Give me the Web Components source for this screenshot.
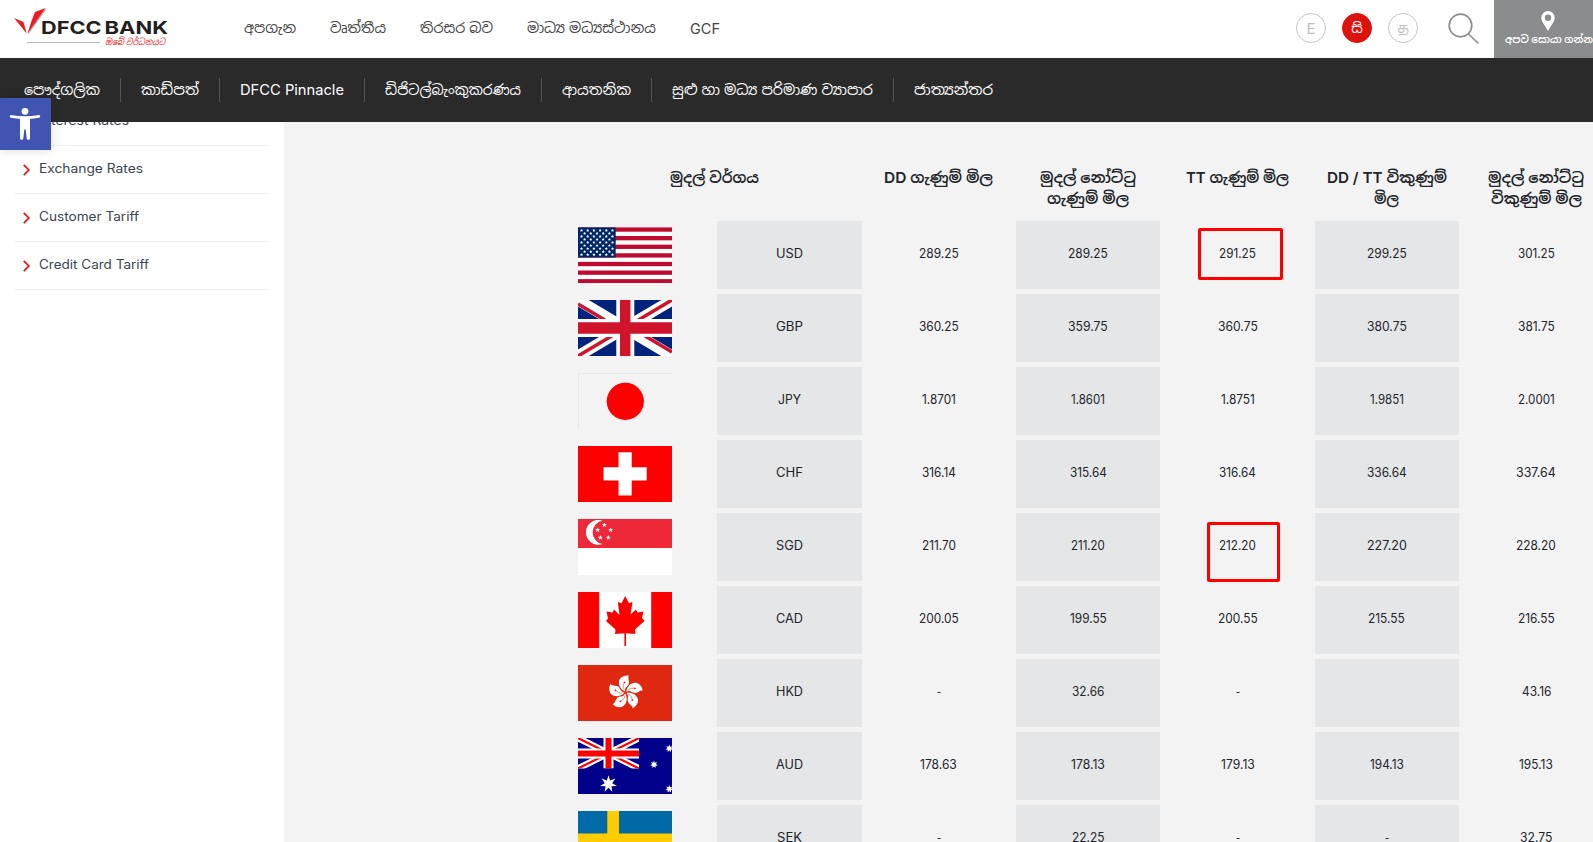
<!DOCTYPE html>
<html lang="si">
<head>
<meta charset="utf-8">
<title>DFCC Bank - Exchange Rates</title>
<style>
  html, body {
    margin: 0;
    height: 100%;
    overflow: hidden;
  }

  body {
    font-family: Inter, "Noto Sans Sinhala", "Noto Sans", sans-serif;
    color: #212529;
    background: #fff;
  }
</style>
</head>
<body>
<bank-page></bank-page>

<script>
// text squeezed or stretched to a given width
class FitText extends HTMLElement {
  constructor() {
    super()
    const shadow = this.attachShadow({ mode: "open" });
    shadow.innerHTML = `
      <style>
        :host { display: inline-block; white-space: nowrap; text-align: left; }
        span { display: inline-block; transform-origin: 0 50%; }
      </style>
      <span><slot></slot></span>
    `
  }

  connectedCallback() {
    const width = Number(this.getAttribute("width"));
    const span = this.shadowRoot.querySelector("span");
    const natural = span.getBoundingClientRect().width;
    this.style.width = `${width}px`;
    if (natural > 0) {
      span.style.transform = `scaleX(${width / natural})`;
    }
  }
}

class BankLogo extends HTMLElement {
  constructor() {
    super()
    const shadow = this.attachShadow({ mode: "open" });
    shadow.innerHTML = `
      <style>
        :host { display: block; width: 170px; height: 58px; }
        svg { display: block; }
      </style>
      <svg width="170" height="58" viewBox="0 0 170 58">
        <path d="M47 8.500 40.500 17.500 29 33.500 27.500 33.500 36 14Z" fill="#b5b5b5"/>
        <path d="M45.500 8 35 12 31.500 21 27.500 33.500 37.500 19.500Z" fill="#ed1c24"/>
        <path d="M14 18 23.500 22 26.700 33.500Z" fill="#ed1c24"/>
        <g font-family="Inter, sans-serif" font-weight="700" font-size="18" fill="#231f20">
          <text x="41" y="34" textLength="60.500" lengthAdjust="spacingAndGlyphs">DFCC</text>
          <text x="104.500" y="34" textLength="63.500" lengthAdjust="spacingAndGlyphs">BANK</text>
        </g>
        <path d="M27 42.500H100" stroke="#b8b8b8"/>
        <text x="105" y="45" font-size="9" font-style="italic" fill="#ed1c24" textLength="60" lengthAdjust="spacingAndGlyphs">ඔබේ වර්ධනයට</text>
      </svg>
    `
  }
}

const topLinks = [["අපගැන", 52, 34], ["වෘත්තීය", 56, 34], ["තිරසර බව", 73, 34], ["මාධ්‍ය මධ්‍යස්ථානය", 129, 34], ["GCF", 30, 0]];

class TopBar extends HTMLElement {
  constructor() {
    super()
    const shadow = this.attachShadow({ mode: "open" });
    shadow.innerHTML = `
      <style>
        :host { display: flex; height: 58px; background: #fff; overflow: hidden; }
        nav { display: flex; align-items: center; padding-left: 74px; flex: 1; font-size: 14px; color: #444; height: 56px; }
        .langs { display: flex; gap: 16px; padding-top: 13px; }
        .langs span {
          box-sizing: border-box; width: 30px; height: 30px; border-radius: 50%;
          border: 1px solid #c6c6c6; color: #c0c0c0; font-size: 15px; line-height: 30px; text-align: center;
        }
        .langs .on { background: #dc130c; border-color: #dc130c; color: #fff; font-size: 14px; line-height: 28px; }
        .langs .ta { font-size: 16px; line-height: 27px; }
        .search { margin: 12px 14px 0 30px; }
        .find {
          width: 99px; background: #8a8c8e; color: #fff; font-size: 10px; font-weight: 600;
          display: flex; flex-direction: column; align-items: flex-start; white-space: nowrap;
        }
        .find svg { margin: 11px 0 0 47px; flex: none; }
        .find fit-text { margin-left: 11px; line-height: 16px; }
      </style>
      <bank-logo></bank-logo>
      <nav>${topLinks.map(([t, w, gap]) => `<fit-text width="${w}" style="margin-right:${gap}px">${t}</fit-text>`).join("")}</nav>
      <div class="langs"><span>E</span><span class="on">සි</span><span class="ta">த</span></div>
      <svg class="search" width="32" height="34" viewBox="0 0 32 34" fill="none" stroke="#8d8d8f" stroke-width="1.700">
        <circle cx="12.500" cy="13.500" r="11.300"/><path d="M20.500 22 30.500 31.500"/>
      </svg>
      <div class="find">
        <svg width="14" height="20" viewBox="0 0 14 20">
          <path fill="#fff" fill-rule="evenodd" d="M7 0a6.700 6.700 0 0 0-6.700 6.700C.3 10.500 3.500 13.500 7 20c3.500-6.500 6.700-9.500 6.700-13.300A6.700 6.700 0 0 0 7 0Zm0 3.600a3.200 3.200 0 1 1 0 6.400 3.200 3.200 0 0 1 0-6.400Z"/>
        </svg>
        <fit-text width="88">අපව සොයා ගන්න</fit-text>
      </div>
    `
  }
}

const mainLinks = [["පෞද්ගලික", 76], ["කාඩ්පත්", 58], ["DFCC Pinnacle", 104], ["ඩිජිටල්බැංකුකරණය", 136], ["ආයතනික", 69], ["සුළු හා මධ්‍ය පරිමාණ ව්‍යාපාර", 201], ["ජාත්‍යන්තර", 79]];

class MainNav extends HTMLElement {
  constructor() {
    super()
    const shadow = this.attachShadow({ mode: "open" });
    shadow.innerHTML = `
      <style>
        :host { display: flex; align-items: center; height: 64px; padding-left: 4px; background: #2a2a2a; color: #fff; font-size: 14.500px; }
        div { display: flex; align-items: center; height: 24px; padding: 0 20px; border-right: 1px solid #555; }
        div:last-child { border: 0; }
        fit-text { margin-bottom: 2px; }
      </style>
      ${mainLinks.map(([t, w]) => `<div><fit-text width="${w}">${t}</fit-text></div>`).join("")}
    `
  }
}

const sideLinks = [["Interest Rates", 90], ["Exchange Rates", 104], ["Customer Tariff", 100], ["Credit Card Tariff", 110]];

class SideMenu extends HTMLElement {
  constructor() {
    super()
    const shadow = this.attachShadow({ mode: "open" });
    shadow.innerHTML = `
      <style>
        :host { display: block; box-sizing: border-box; width: 284px; padding: 0 15px 0 14px; margin-top: -24px; flex: none; }
        div {
          box-sizing: border-box; height: 48px; width: 255px; padding-left: 9px; border-bottom: 1px solid #f0f0f0;
          display: flex; align-items: center; gap: 9px; font-size: 12.800px; color: #3b4450;
        }
        fit-text { margin-bottom: 2px; }
      </style>
      ${sideLinks.map(([t, w]) => `
        <div>
          <svg width="7" height="12" viewBox="0 0 7 12" fill="none" stroke="#e21b22" stroke-width="1.800"><path d="M.8 .8 5.800 6 .8 11.200"/></svg>
          <fit-text width="${w}">${t}</fit-text>
        </div>`).join("")}
    `
  }
}

// points of a star centred on x, y
function star(x, y, outer, inner, n) {
  const pts = [];
  for (let i = 0; i < n * 2; i++) {
    const r = i % 2 ? inner : outer;
    const a = Math.PI * i / n - Math.PI / 2;
    pts.push(`${(x + r * Math.cos(a)).toFixed(2)},${(y + r * Math.sin(a)).toFixed(2)}`);
  }
  return `<polygon fill="#fff" points="${pts.join(" ")}"/>`;
}

function usFlag() {
  let s = `<rect width="94" height="56" fill="#fff"/>`;
  for (let i = 0; i < 13; i += 2) {
    s += `<rect y="${i * 4.31 + .4}" width="94" height="4.310" fill="#bf0a30"/>`;
  }
  s += `<rect y=".4" width="37.700" height="30.150" fill="#002868"/>`;
  for (let row = 0; row < 9; row++) {
    for (let col = 0; col < (row % 2 ? 5 : 6); col++) {
      s += star(3.5 + (row % 2 ? 3.1 : 0) + col * 6.2, 3.4 + row * 3.03, 1.6, .8, 5);
    }
  }
  return s;
}

const flags = {
  USD: usFlag(),
  GBP: `<rect width="94" height="56" fill="#00247d"/>
    <path d="M0 0 94 56M94 0 0 56" stroke="#fff" stroke-width="11"/>
    <path d="M0 4 42 29M94 52 52 27M94 0 47 28M0 56 47 28" stroke="#cf142b" stroke-width="3.600"/>
    <path d="M47.300 0V56M0 28H94" stroke="#fff" stroke-width="18"/>
    <path d="M47.200 0V56" stroke="#cf142b" stroke-width="10.500"/><path d="M0 28H94" stroke="#cf142b" stroke-width="11.500"/>`,
  JPY: `<path d="M.5 56V.5H94" fill="none" stroke="#e8e8e8"/><circle cx="47.300" cy="28.300" r="18.600" fill="red"/>`,
  CHF: `<rect width="94" height="56" fill="red"/><path d="M40.500 6.300H53.700V21.300H68.700V34.500H53.700V49.500H40.500V34.500H25.500V21.300H40.500Z" fill="#fff"/>`,
  SGD: `<rect width="94" height="56" fill="#fff"/><rect width="94" height="29" fill="#ed2939"/>
    <path d="M24.500 1.700A12.400 12.400 0 1 0 24.500 25 11.800 11.800 0 0 1 24.500 1.700Z" fill="#fff"/>
    ${star(26.3, 6, 2.6, 1.1, 5)}${star(19.7, 11, 2.6, 1.1, 5)}${star(32.7, 11, 2.6, 1.1, 5)}${star(22.3, 18.7, 2.6, 1.1, 5)}${star(30.3, 18.7, 2.6, 1.1, 5)}`,
  CAD: `<rect width="94" height="56" fill="#fff"/><path d="M0 0H21.200V56H0ZM73.200 0H94V56H73.200Z" fill="red"/>
    <path fill="red" d="M47.200 4 51 11.300 54.500 10 52.500 22.500 58 17.500 59.500 20.500 65.500 19.500 64 26 66.500 29 57 37.500 57.500 42 48 41.200V54H46.400V41.200L37 42 37.500 37.500 28 29 30 26.500 28.500 19.500 34.500 20.500 36 17.500 41.500 23 39.800 10 43.500 11.300Z"/>`,
  HKD: `<rect width="94" height="56" fill="#de2910"/>
    ${[0, 72, 144, 216, 288].map(a => `<g transform="rotate(${a} 47.500 27.500)">
      <path fill="#fff" d="M47 26.500C42.500 24.500 39.500 19 41.500 14.500 43.300 11.300 47.500 10 51 10.500 49.500 12.500 51 14.500 51 17.500 51 21.500 46.300 21.500 47 26.500Z"/>
      <path d="M46 24.500C44.700 22 45.500 19.500 46.300 17.500" fill="none" stroke="#de2910" stroke-width=".5"/><circle cx="46.500" cy="17.300" r=".9" fill="#de2910"/>
    </g>`).join("")}`,
  AUD: `<rect width="94" height="56" fill="#00008b"/>
    <svg width="61" height="30.500" viewBox="0 0 61 30.500">
      <path d="M0 0 61 30.500M61 0 0 30.500" stroke="#fff" stroke-width="6.500"/>
      <path d="M0 0 61 30.500M61 0 0 30.500" stroke="red" stroke-width="2.200"/>
      <path d="M30.500 0V30.500M0 15.500H61" stroke="#fff" stroke-width="10"/>
      <path d="M30.500 0V30.500M0 15.500H61" stroke="red" stroke-width="6"/>
    </svg>
    ${star(30.5, 46, 8.7, 3.8, 7)}${star(76, 26.5, 4, 1.9, 7)}${star(91.3, 10.5, 4, 1.9, 7)}${star(91.3, 51, 4, 1.9, 7)}`,
  SEK: `<rect width="94" height="56" fill="#006aa7"/><path d="M29.300 0H41V22.500H94V34H41V56H29.300V34H0V22.500H29.300Z" fill="#fecc00"/>`
};

class CurrencyFlag extends HTMLElement {
  constructor() {
    super()
    const shadow = this.attachShadow({ mode: "open" });
    shadow.innerHTML = `
      <style>
        :host { display: block; }
        svg { display: block; }
      </style>
      <svg width="94" height="56" viewBox="0 0 94 56">${flags[this.getAttribute("code")]}</svg>
    `
  }
}

const headings = [
  [["මුදල් වර්ගය", 89]],
  [["DD ගැණුම් මිල", 109]],
  [["මුදල් නෝට්ටු", 96], ["ගැණුම් මිල", 82]],
  [["TT ගැණුම් මිල", 103]],
  [["DD / TT විකුණුම්", 120], ["මිල", 25]],
  [["මුදල් නෝට්ටු", 96], ["විකුණුම් මිල", 91]]
];

const rates = [
  ["USD", "289.25", "289.25", "291.25", "299.25", "301.25"],
  ["GBP", "360.25", "359.75", "360.75", "380.75", "381.75"],
  ["JPY", "1.8701", "1.8601", "1.8751", "1.9851", "2.0001"],
  ["CHF", "316.14", "315.64", "316.64", "336.64", "337.64"],
  ["SGD", "211.70", "211.20", "212.20", "227.20", "228.20"],
  ["CAD", "200.05", "199.55", "200.55", "215.55", "216.55"],
  ["HKD", "-", "32.66", "-", "", "43.16"],
  ["AUD", "178.63", "178.13", "179.13", "194.13", "195.13"],
  ["SEK", "-", "22.25", "-", "-", "32.75"]
];

// narrow 1 and full stop, even width for the rest
function figureWidth(text) {
  if (text === "-") return 4;
  if (/[A-Z]/.test(text)) return text === "JPY" ? 23 : text === "SEK" ? 25 : 27;
  return [...text].reduce((w, c) => w + (c === "." ? 3 : c === "1" ? 4.4 : 7.35), 0);
}

class RateTable extends HTMLElement {
  constructor() {
    super()
    const shadow = this.attachShadow({ mode: "open" });
    shadow.innerHTML = `
      <style>
        :host { display: block; position: relative; flex: 1; background: #f3f3f3; padding: 45px 0 0 284px; overflow: hidden; }
        .grid { display: grid; grid-template-columns: repeat(7, 144.350px); gap: 5px; width: max-content; }
        .head { display: flex; flex-direction: column; align-items: center; height: 49px; font-size: 15px; font-weight: 600; }
        .head:first-child { grid-column: span 2; }
        .head fit-text { height: 21px; line-height: 21px; }
        .flag { padding: 6px 0 0 10px; }
        .cell { display: flex; justify-content: center; height: 68px; line-height: 65px; font-size: 12.500px; }
        .shade { background: #e5e6e7; }
        .mark { position: absolute; box-sizing: border-box; border: 3px solid #f00; border-radius: 2px; }
        .usd { left: 914px; top: 106px; width: 85px; height: 52px; }
        .sgd { left: 923px; top: 400px; width: 73px; height: 60px; }
      </style>
      <div class="grid">
        ${headings.map(lines => `<div class="head">${lines.map(([t, w]) => `<fit-text width="${w}">${t}</fit-text>`).join("")}</div>`).join("")}
        ${rates.map(row => `<div class="flag"><currency-flag code="${row[0]}"></currency-flag></div>` +
          row.map((t, i) => `<div class="cell ${i % 2 ? "" : "shade"}">${t && `<fit-text width="${figureWidth(t)}">${t}</fit-text>`}</div>`).join("")).join("")}
      </div>
      <div class="mark usd"></div>
      <div class="mark sgd"></div>
    `
  }
}

class AccessButton extends HTMLElement {
  constructor() {
    super()
    const shadow = this.attachShadow({ mode: "open" });
    shadow.innerHTML = `
      <style>
        :host { display: block; width: 51px; height: 52px; background: #4054b2; box-shadow: 0 0 10px rgba(0, 0, 0, .15); }
        svg { display: block; }
      </style>
      <svg width="51" height="52" viewBox="0 0 51 52" fill="#fff">
        <circle cx="25" cy="13.300" r="3.400"/>
        <path d="M11 17Q25 19.500 39 17C40.500 16.700 40.700 19.400 39.200 19.700L30 21V40.500C30 42.200 27 42.200 26.700 40.500L25.700 31.500H24.300L23.300 40.500C23 42.200 20 42.200 20 40.500V21L10.800 19.700C9.300 19.400 9.500 16.700 11 17Z"/>
      </svg>
    `
  }
}

class BankPage extends HTMLElement {
  constructor() {
    super()
    const shadow = this.attachShadow({ mode: "open" });
    shadow.innerHTML = `
      <style>
        :host { display: flex; flex-direction: column; height: 100vh; overflow: hidden; }
        header { position: relative; z-index: 1; flex: none; }
        main { display: flex; flex: 1; min-height: 0; }
        access-button { position: absolute; left: 0; top: 98px; z-index: 2; }
      </style>
      <header><top-bar></top-bar><main-nav></main-nav></header>
      <main><side-menu></side-menu><rate-table></rate-table></main>
      <access-button></access-button>
    `
  }
}

customElements.define("bank-logo", BankLogo);
customElements.define("currency-flag", CurrencyFlag);
customElements.define("top-bar", TopBar);
customElements.define("main-nav", MainNav);
customElements.define("side-menu", SideMenu);
customElements.define("rate-table", RateTable);
customElements.define("access-button", AccessButton);
customElements.define("bank-page", BankPage);
// last, so every text is laid out by the time it is measured
customElements.define("fit-text", FitText);
</script>
</body>
</html>
